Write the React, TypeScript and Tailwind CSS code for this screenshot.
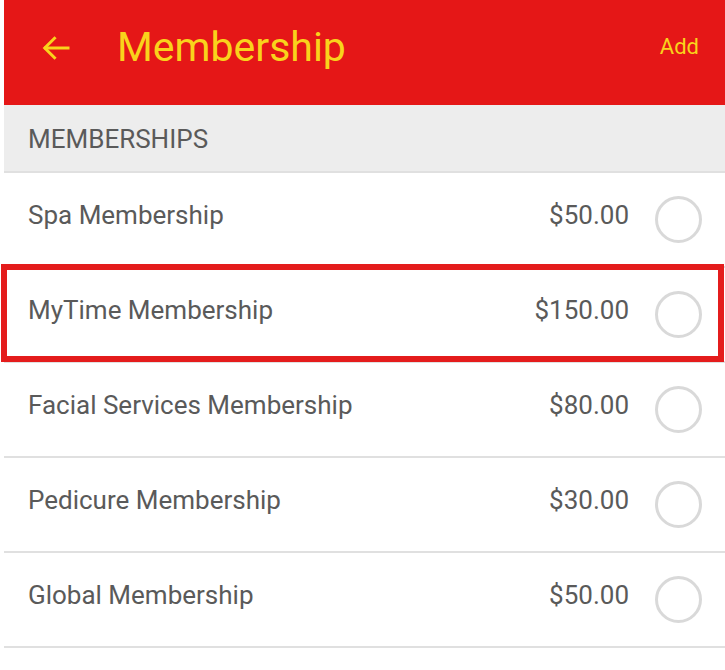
import { FC } from 'react'

type Plan = { name: string; price: string }

const plans: Plan[] = [
  { name: 'Spa Membership', price: '$50.00' },
  { name: 'MyTime Membership', price: '$150.00' },
  { name: 'Facial Services Membership', price: '$80.00' },
  { name: 'Pedicure Membership', price: '$30.00' },
  { name: 'Global Membership', price: '$50.00' },
]

const BackArrow: FC = () => (
  <svg width="36" height="36" viewBox="0 0 24 24" fill="none" stroke="#f9d31c" strokeWidth="2" strokeLinecap="square">
    <path d="M20 12H5" />
    <path d="M11 5.5 4.5 12l6.5 6.5" />
  </svg>
)

const App: FC = () => {
  return (
    <div className="w-[725px] h-[670px] bg-white pl-[4px] overflow-hidden font-['Roboto',sans-serif]">
      {/* Toolbar */}
      <header className="h-[105px] bg-[#e51717] flex items-center pl-[34px] pr-[26px] pb-[10px]">
        <BackArrow />
        <h1 className="ml-[43px] text-[41px] text-[#f9d31c] leading-none">Membership</h1>
        <button className="ml-auto text-[22px] text-[#f9d31c] pb-[2px]">Add</button>
      </header>

      {/* Section header */}
      <div className="h-[68px] bg-[#ededed] border-b-2 border-[#e0e0e0] flex items-center pl-[24px] pt-[2px]">
        <span className="text-[26px] text-[#5a5a5a]">MEMBERSHIPS</span>
      </div>

      {/* List */}
      <ul>
        {plans.map((p, i) => (
          <li key={p.name} className="relative h-[95px] border-b-2 border-[#e0e0e0] flex items-center pl-[24px] pr-[23px] pb-[8px]">
            <span className="text-[26px] text-[#5a5a5a]">{p.name}</span>
            <span className="ml-auto text-[26px] text-[#5a5a5a]">{p.price}</span>
            <span className="ml-[26px] w-[47px] h-[47px] rounded-full border-[3px] border-[#d9d9d9] mt-[8px]" />
            {i === 1 && (
              <div className="absolute left-[-3px] right-[1px] top-[-4px] bottom-[-1px] border-[6px] border-[#e41c1c]" />
            )}
          </li>
        ))}
      </ul>
    </div>
  )
}

export default App
